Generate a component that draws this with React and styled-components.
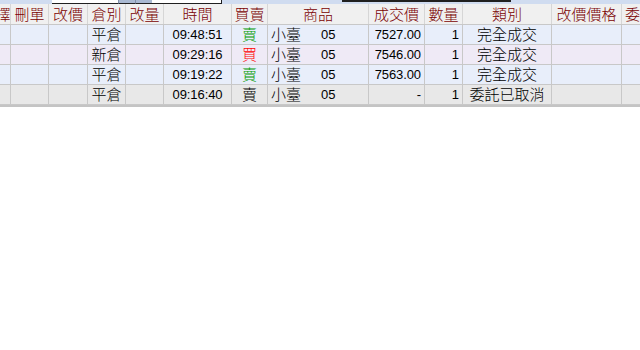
import React from 'react'
import styled, { createGlobalStyle } from 'styled-components'

const GlobalStyle = createGlobalStyle`
    html, body {
        margin: 0;
        padding: 0;
        background: #ffffff;
    }

    body {
        font-family: "Liberation Sans", "Noto Sans CJK TC", sans-serif;
    }
`

const COLS = '30px 38px 39px 38px 38px 68px 36px 101px 56px 38px 89px 70px 60px'

const Page = styled.div`
    width: 640px;
    height: 350px;
    overflow: hidden;
    background: #ffffff;
`

const TopBar = styled.div`
    display: flex;
    height: 4px;
    background: #d0dcf0;
`

const Gap = styled.div`
    width: ${(p) => p.w}px;
    flex: none;
`

const Field = styled.div`
    width: ${(p) => p.w}px;
    flex: none;
    background: #ffffff;
    border-bottom: 1px solid #202020;
    border-right: ${(p) => (p.edge ? '1px solid #202020' : '0')};
    box-sizing: border-box;
`

const MiniButton = styled.div`
    width: 17px;
    flex: none;
    background: #a9b9d2;
    border-left: 1px solid #7f8ea8;
    border-bottom: 1px solid #202020;
    box-sizing: border-box;
`

const Rule = styled.div`
    width: ${(p) => p.w}px;
    flex: none;
    border-top: 2px solid #202020;
    box-sizing: border-box;
`

const Grid = styled.div`
    margin-left: -19px;
    width: 661px;
    border-bottom: 2px solid #c4c4c4;
`

const Row = styled.div`
    display: grid;
    grid-template-columns: ${COLS};
    height: ${(p) => (p.head ? 21 : 20)}px;
    background: ${(p) => p.bg};
    border-bottom: 1px solid #c8c8c8;
    box-sizing: border-box;
`

const Cell = styled.div`
    display: flex;
    align-items: center;
    justify-content: ${(p) => p.align || 'center'};
    padding: 0 ${(p) => (p.align === 'flex-end' ? 3 : 0)}px 0 ${(p) => (p.align === 'flex-start' ? 3 : 0)}px;
    border-right: 1px solid ${(p) => (p.head ? '#d6d6d6' : '#c8c8c8')};
    box-sizing: border-box;
    overflow: hidden;
    white-space: nowrap;
    font-size: 15px;
    font-weight: 300;
    line-height: 19px;
    color: ${(p) => p.color || '#000000'};
`

const HeadText = styled.span`
    color: #7a0000;
    font-size: 15px;
    font-weight: 300;
`

const Num = styled.span`
    font-size: 13px;
    font-weight: 400;
    letter-spacing: -0.1px;
`

const Product = styled.span`
    display: inline-block;
    width: 50px;
`

const headers = ['選擇', '刪單', '改價', '倉別', '改量', '時間', '買賣', '商品', '成交價', '數量', '類別', '改價價格', '委託書號']

const rows = [
    { bg: '#e8eefa', kind: '平倉', time: '09:48:51', side: '賣', price: '7527.00', qty: '1', status: '完全成交' },
    { bg: '#efeaf6', kind: '新倉', time: '09:29:16', side: '買', price: '7546.00', qty: '1', status: '完全成交' },
    { bg: '#e8eefa', kind: '平倉', time: '09:19:22', side: '賣', price: '7563.00', qty: '1', status: '完全成交' },
    { bg: '#e8e8e8', kind: '平倉', time: '09:16:40', side: '賣', price: '-', qty: '1', status: '委託已取消', cancelled: true },
]

const sideColor = (row) => {
    if (row.cancelled) return '#000000'
    return row.side === '買' ? '#ff0000' : '#009a00'
}

const App = () => (
    <Page>
        <GlobalStyle />
        <TopBar>
            <Gap w={52} />
            <Field w={66} />
            <MiniButton />
            <MiniButton />
            <Field w={70} edge />
            <Gap w={120} />
            <Rule w={169} />
        </TopBar>
        <Grid>
            <Row head bg="#f0f0f0">
                {headers.map((h, i) => (
                    <Cell head key={h} align={i === headers.length - 1 ? 'flex-start' : undefined}>
                        <HeadText>{h}</HeadText>
                    </Cell>
                ))}
            </Row>
            {rows.map((row) => (
                <Row key={row.time} bg={row.bg}>
                    <Cell />
                    <Cell />
                    <Cell />
                    <Cell>{row.kind}</Cell>
                    <Cell />
                    <Cell><Num>{row.time}</Num></Cell>
                    <Cell color={sideColor(row)}>{row.side}</Cell>
                    <Cell align="flex-start">
                        <Product>小臺</Product>
                        <Num>05</Num>
                    </Cell>
                    <Cell align="flex-end"><Num>{row.price}</Num></Cell>
                    <Cell align="flex-end"><Num>{row.qty}</Num></Cell>
                    <Cell>{row.status}</Cell>
                    <Cell />
                    <Cell />
                </Row>
            ))}
        </Grid>
    </Page>
)

export default App
